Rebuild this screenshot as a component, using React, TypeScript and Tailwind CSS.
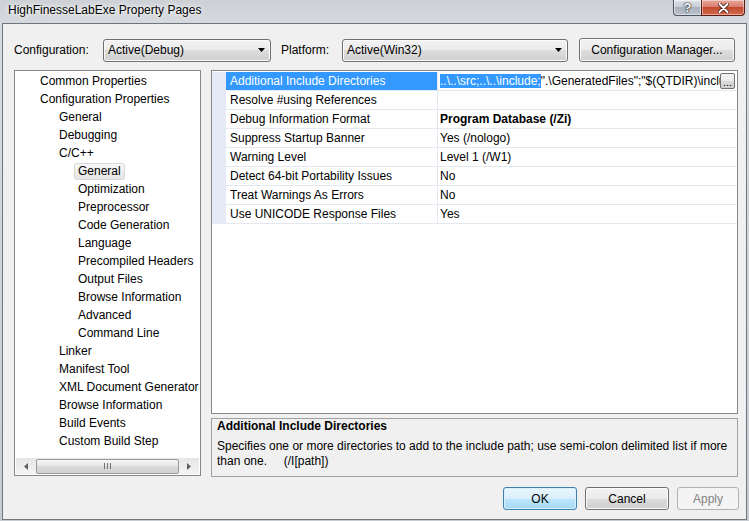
import React from 'react';

const btnFace =
  'bg-[linear-gradient(#f2f2f2_0%,#ebebeb_50%,#dddddd_50%,#cfcfcf_100%)] border border-[#707070] rounded-[3px] shadow-[inset_0_0_0_1px_#fcfcfc]';

type TreeItem = { level: 1 | 2 | 3; label: string; selected?: boolean };

const treeItems: TreeItem[] = [
  { level: 1, label: 'Common Properties' },
  { level: 1, label: 'Configuration Properties' },
  { level: 2, label: 'General' },
  { level: 2, label: 'Debugging' },
  { level: 2, label: 'C/C++' },
  { level: 3, label: 'General', selected: true },
  { level: 3, label: 'Optimization' },
  { level: 3, label: 'Preprocessor' },
  { level: 3, label: 'Code Generation' },
  { level: 3, label: 'Language' },
  { level: 3, label: 'Precompiled Headers' },
  { level: 3, label: 'Output Files' },
  { level: 3, label: 'Browse Information' },
  { level: 3, label: 'Advanced' },
  { level: 3, label: 'Command Line' },
  { level: 2, label: 'Linker' },
  { level: 2, label: 'Manifest Tool' },
  { level: 2, label: 'XML Document Generator' },
  { level: 2, label: 'Browse Information' },
  { level: 2, label: 'Build Events' },
  { level: 2, label: 'Custom Build Step' },
];

const rows: { name: string; value: string; bold?: boolean }[] = [
  { name: 'Resolve #using References', value: '' },
  { name: 'Debug Information Format', value: 'Program Database (/Zi)', bold: true },
  { name: 'Suppress Startup Banner', value: 'Yes (/nologo)' },
  { name: 'Warning Level', value: 'Level 1 (/W1)' },
  { name: 'Detect 64-bit Portability Issues', value: 'No' },
  { name: 'Treat Warnings As Errors', value: 'No' },
  { name: 'Use UNICODE Response Files', value: 'Yes' },
];

function ComboBox({ value, width }: { value: string; width: string }) {
  return (
    <div className={`${width} ${btnFace} flex h-[23px] items-center pl-[4px] pr-[5px]`}>
      <span className="flex-1">{value}</span>
      <svg width="7" height="4" viewBox="0 0 7 4">
        <path d="M0 0h7L3.5 4z" fill="#000" />
      </svg>
    </div>
  );
}

function TreeScrollbar() {
  return (
    <div className="mx-[1px] mb-[1px] flex h-[16px] items-center bg-[linear-gradient(#e6e6e6,#f4f4f4)]">
      <div className="flex w-[20px] items-center justify-center">
        <svg width="4" height="7" viewBox="0 0 4 7">
          <path d="M4 0v7L0 3.5z" fill="#606060" />
        </svg>
      </div>
      <div className="flex h-[15px] w-[144px] items-center justify-center gap-[2px] rounded-[2px] border border-[#9a9a9a] bg-[linear-gradient(#f5f5f5_0%,#e6e6e6_50%,#d9d9d9_50%,#d2d2d2_100%)]">
        <span className="h-[6px] w-[1px] bg-[#707070]" />
        <span className="h-[6px] w-[1px] bg-[#707070]" />
        <span className="h-[6px] w-[1px] bg-[#707070]" />
      </div>
      <div className="flex-1" />
      <div className="flex w-[20px] items-center justify-center">
        <svg width="4" height="7" viewBox="0 0 4 7">
          <path d="M0 0v7L4 3.5z" fill="#606060" />
        </svg>
      </div>
    </div>
  );
}

export default function App() {
  return (
    <div className="flex h-[521px] w-[749px] flex-col overflow-hidden bg-[linear-gradient(#cdd1d6,#d9dcdf_30px,#c7ccd2)] font-['Liberation_Sans',Arial,sans-serif] text-[12px] text-black">
      {/* title bar */}
      <div className="flex h-[23px] shrink-0 items-start">
        <span className="ml-[8px] mt-[3px] leading-[15px] [text-shadow:0_0_6px_#ffffff,0_0_3px_#ffffff]">
          HighFinesseLabExe Property Pages
        </span>
        <div className="ml-auto mr-[4px] flex">
          <div className="flex h-[16px] w-[28px] items-center justify-center rounded-bl-[4px] border border-t-0 border-r-0 border-[#4b5561] bg-[linear-gradient(#dfe3e8_0%,#c5ccd4_50%,#aab3bd_50%,#b8c0c9_100%)] shadow-[inset_0_0_0_1px_#ffffff80]">
            <span className="font-bold text-[13px] leading-[14px] text-white [text-shadow:0_0_2px_#000,0_0_1px_#000]">?</span>
          </div>
          <div className="flex h-[16px] w-[44px] items-center justify-center rounded-br-[4px] border border-t-0 border-[#5b1d13] bg-[linear-gradient(#e8a99c_0%,#d8786a_50%,#c14b30_50%,#d36a4c_100%)] shadow-[inset_0_0_0_1px_#ffffff70]">
            <svg width="11" height="10" viewBox="0 0 11 10">
              <path d="M1.5 1l8 8M9.5 1l-8 8" stroke="#3a1208" strokeWidth="3.6" strokeLinecap="round" />
              <path d="M1.5 1l8 8M9.5 1l-8 8" stroke="#ffffff" strokeWidth="2" strokeLinecap="round" />
            </svg>
          </div>
        </div>
      </div>

      {/* client area */}
      <div className="mx-[2px] mb-[1px] flex flex-1 flex-col border border-[#6f757c] bg-[#f0f0f0]">
        {/* configuration row */}
        <div className="mt-[14px] flex items-center pl-[11px]">
          <span className="w-[89px]">Configuration:</span>
          <ComboBox value="Active(Debug)" width="w-[168px]" />
          <span className="ml-[10px] w-[61px]">Platform:</span>
          <ComboBox value="Active(Win32)" width="w-[226px]" />
          <div className={`ml-[11px] flex h-[24px] w-[156px] items-center justify-center ${btnFace}`}>
            Configuration Manager...
          </div>
        </div>

        {/* main area */}
        <div className="mt-[8px] flex pl-[11px]">
          {/* tree */}
          <div className="flex h-[406px] w-[187px] flex-col border border-[#828790] bg-white">
            <div className="flex-1 overflow-hidden pt-[1px]">
              {treeItems.map((item, i) => (
                <div
                  key={i}
                  className={`flex h-[18px] items-center whitespace-nowrap ${
                    item.level === 1 ? 'pl-[25px]' : item.level === 2 ? 'pl-[44px]' : 'pl-[59px]'
                  }`}
                >
                  <span
                    className={`flex h-[17px] items-center rounded-[3px] border px-[3px] ${
                      item.level === 3 ? '' : '-ml-[4px]'
                    } ${
                      item.selected
                        ? 'border-[#d9d9d9] bg-[linear-gradient(#f8f8f8,#e5e5e5)]'
                        : 'border-transparent'
                    }`}
                  >
                    {item.label}
                  </span>
                </div>
              ))}
            </div>
            <TreeScrollbar />
          </div>

          {/* right column */}
          <div className="ml-[10px] flex w-[527px] min-w-0 flex-col">
            {/* property grid */}
            <div className="h-[344px] overflow-hidden border border-[#828790] bg-white pt-[1px]">
              <div className="flex border-b border-[#e3e7f0]">
                <div className="w-[14px] bg-[#e6eaf6]" />
                <div className="flex h-[18px] w-[211px] items-center bg-[#3399ff] pl-[4px] text-white">
                  Additional Include Directories
                </div>
                <div className="w-[1px] bg-[#e3e7f0]" />
                <div className="flex h-[18px] min-w-0 flex-1 items-center pl-[2px]">
                  <span className="min-w-0 flex-1 overflow-hidden whitespace-nowrap">
                    <span className="bg-[#3399ff] text-white">..\..\src;..\..\include;</span>
                    {'".\\GeneratedFiles";"$(QTDIR)\\include";"$(QTDIR)\\include\\QtCore"'}
                  </span>
                  <div className="mr-[2px] flex h-[16px] w-[15px] shrink-0 items-end justify-center rounded-[2px] border border-[#707070] bg-[linear-gradient(#f2f2f2_0%,#ebebeb_50%,#dddddd_50%,#cfcfcf_100%)] pb-[2px] text-[11px] leading-[8px]">
                    ...
                  </div>
                </div>
              </div>
              {rows.map((r) => (
                <div key={r.name} className="flex border-b border-[#e3e7f0]">
                  <div className="w-[14px] bg-[#e6eaf6]" />
                  <div className="flex h-[18px] w-[211px] items-center whitespace-nowrap pl-[4px]">{r.name}</div>
                  <div className="w-[1px] bg-[#e3e7f0]" />
                  <div className={`flex h-[18px] flex-1 items-center pl-[2px] ${r.bold ? 'font-bold' : ''}`}>
                    {r.value}
                  </div>
                </div>
              ))}
            </div>

            {/* description */}
            <div className="mt-[4px] h-[59px] border border-[#a0a0a0] bg-[#f0f0f0] pl-[5px]">
              <div className="pt-[1px] font-bold leading-[13px]">Additional Include Directories</div>
              <div className="mt-[6px] whitespace-pre leading-[15px]">
                {'Specifies one or more directories to add to the include path; use semi-colon delimited list if more\nthan one.     (/I[path])'}
              </div>
            </div>
          </div>
        </div>

        {/* buttons */}
        <div className="mt-[10px] flex justify-end gap-[8px] pr-[7px]">
          <div className="flex h-[23px] w-[74px] items-center justify-center rounded-[3px] border border-[#3c7fb1] bg-[linear-gradient(#eaf6fd_0%,#d9f0fc_50%,#bee6fd_50%,#a7d9f5_100%)] shadow-[inset_0_0_0_1px_#d8f0fc]">
            OK
          </div>
          <div className={`flex h-[23px] w-[84px] items-center justify-center ${btnFace}`}>Cancel</div>
          <div className="flex h-[23px] w-[62px] items-center justify-center rounded-[3px] border border-[#adb2b5] bg-[#f4f4f4] text-[#838383]">
            Apply
          </div>
        </div>
      </div>
    </div>
  );
}
